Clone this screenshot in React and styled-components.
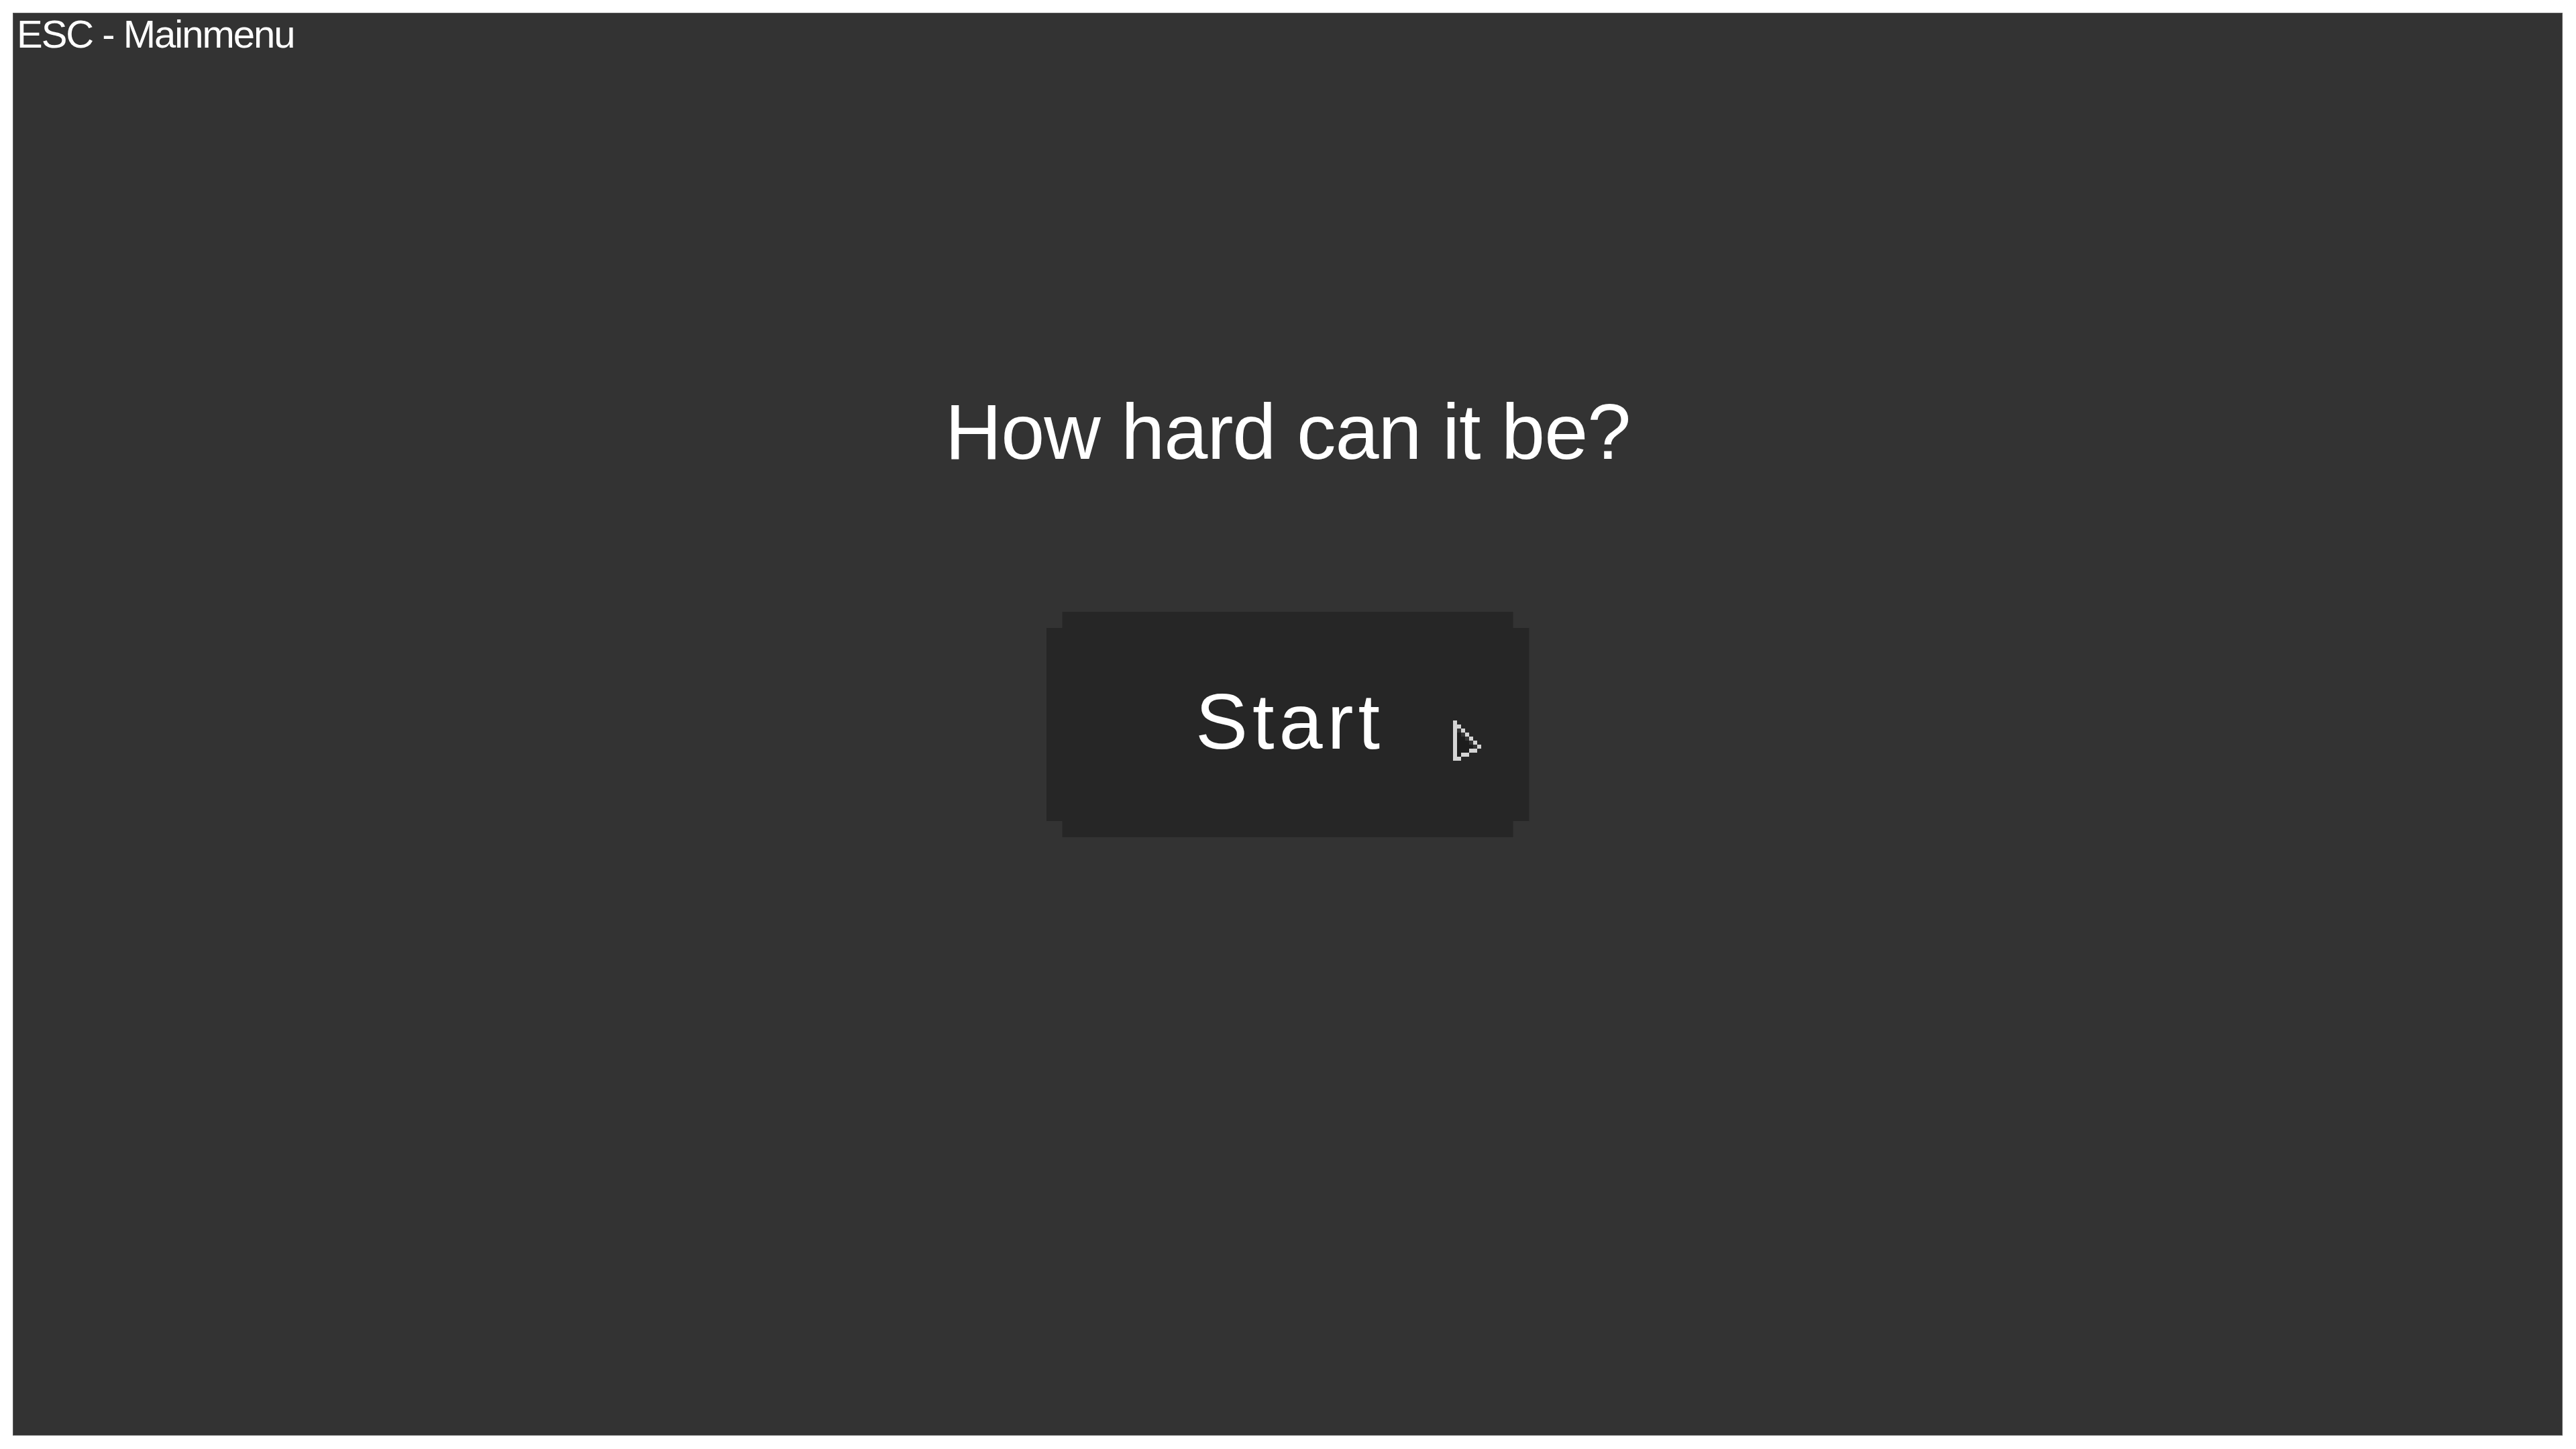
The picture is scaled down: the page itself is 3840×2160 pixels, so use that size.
import React from "react";
import styled, { createGlobalStyle } from "styled-components";

const Global = createGlobalStyle`
  html, body {
    margin: 0;
    padding: 0;
    background: #ffffff;
  }
  * { box-sizing: border-box; }
`;

const Frame = styled.div`
  padding: 19px 20px 20px 19px;
  width: 100%;
  min-height: 100vh;
`;

const Panel = styled.main`
  width: 100%;
  height: 2121px;
  background: #333333;
  border: 1px solid #5a5a5a;
  display: flex;
  flex-direction: column;
  align-items: center;
  font-family: "Liberation Sans", Arial, sans-serif;
  color: #ffffff;
`;

const Hint = styled.div`
  align-self: flex-start;
  margin: 2px 0 0 5px;
  font-size: 58px;
  line-height: 58px;
  letter-spacing: -2px;
  white-space: nowrap;
`;

const Title = styled.h1`
  margin: 505px 0 0 0;
  font-size: 117px;
  line-height: 117px;
  font-weight: 400;
  letter-spacing: -1px;
  white-space: nowrap;
`;

const MenuButton = styled.button`
  position: relative;
  margin-top: 210px;
  width: 720px;
  height: 336px;
  border: none;
  background: #262626;
  color: #ffffff;
  font-family: "Liberation Sans", Arial, sans-serif;
  font-size: 117px;
  line-height: 117px;
  letter-spacing: 7px;
  display: flex;
  align-items: center;
  justify-content: center;
  padding: 0 0 9px 7px;
  cursor: pointer;
  clip-path: polygon(
    24px 0, calc(100% - 24px) 0, calc(100% - 24px) 24px, 100% 24px,
    100% calc(100% - 24px), calc(100% - 24px) calc(100% - 24px),
    calc(100% - 24px) 100%, 24px 100%, 24px calc(100% - 24px),
    0 calc(100% - 24px), 0 24px, 24px 24px
  );
`;

const Pointer = styled.svg`
  position: absolute;
  left: 606px;
  top: 162px;
  width: 42px;
  height: 60px;
`;

const light = [
  [0, 0], [0, 1], [1, 1], [0, 2], [2, 2], [0, 3], [3, 3], [0, 4], [4, 4],
  [0, 5], [5, 5], [0, 6], [6, 6], [0, 7], [4, 7], [5, 7], [0, 8], [2, 8],
  [3, 8], [0, 9], [1, 9],
];
const dark = [
  [1, 3], [1, 4], [2, 4], [1, 5], [2, 5], [3, 5], [1, 6], [2, 6], [3, 6],
  [4, 6], [1, 7], [2, 7], [3, 7], [1, 8],
];
const mid = [[1, 2], [2, 3], [3, 4], [4, 5], [5, 6]];

function CursorIcon() {
  return (
    <Pointer viewBox="0 0 7 10" shapeRendering="crispEdges" aria-hidden="true">
      {dark.map(([x, y]) => (
        <rect key={`d${x}-${y}`} x={x} y={y} width="1" height="1" fill="#1d1d1d" />
      ))}
      {mid.map(([x, y]) => (
        <rect key={`m${x}-${y}`} x={x} y={y} width="1" height="1" fill="#353535" />
      ))}
      {light.map(([x, y]) => (
        <rect key={`l${x}-${y}`} x={x} y={y} width="1" height="1" fill="#d4d4d4" />
      ))}
    </Pointer>
  );
}

export default function App() {
  return (
    <>
      <Global />
      <Frame>
        <Panel>
          <Hint>ESC - Mainmenu</Hint>
          <Title>How hard can it be?</Title>
          <MenuButton>
            Start
            <CursorIcon />
          </MenuButton>
        </Panel>
      </Frame>
    </>
  );
}
